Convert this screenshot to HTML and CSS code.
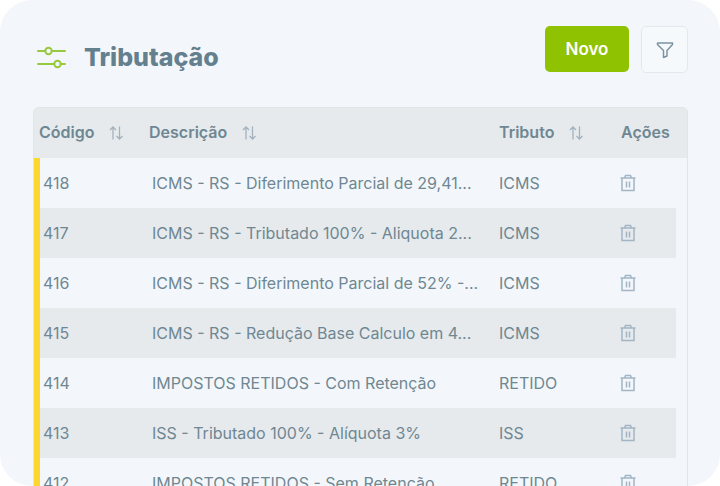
FILE: index.html
```html
<!DOCTYPE html>
<html lang="pt-BR">
<head>
  <meta charset="UTF-8">
  <meta name="viewport" content="width=device-width, initial-scale=1.0">
  <title>Tributação</title>
  <link rel="stylesheet" href="styles.css">
</head>
<body>
  <!-- ícones reutilizados na tabela -->
  <svg class="sprite" aria-hidden="true">
    <symbol id="sort" viewBox="0 0 14 14">
      <path d="M4 13.500V1M1 4l3-3 3 3M10.500 0.500V13M7.500 10l3 3 3-3"/>
    </symbol>
    <symbol id="trash" viewBox="0 0 16 18">
      <path d="M0.500 4h15M2 4v12.500h12V4M4.500 4l1-2.500h5l1 2.500M6.500 7.500v6M9.500 7.500v6"/>
    </symbol>
  </svg>

  <main class="card">
    <header class="topbar">
      <svg class="title-icon" viewBox="0 0 30 24" aria-hidden="true">
        <path d="M1 6h7M15 6h13M1 19h16M24 19h4"/>
        <circle cx="11.500" cy="6" r="3.200"/>
        <circle cx="20.500" cy="19" r="3.200"/>
      </svg>
      <h1>Tributação</h1>
      <button type="button" class="btn-new">Novo</button>
      <button type="button" class="btn-filter" aria-label="Filtrar">
        <svg viewBox="0 0 18 18" aria-hidden="true">
          <path d="M1.500 2h15v1.500L11 9.500V15l-3.500 1.500v-7L1.500 3.500z"/>
        </svg>
      </button>
    </header>

    <div class="table-box">
      <table>
        <colgroup>
          <col class="col-code">
          <col>
          <col class="col-tax">
          <col class="col-actions">
        </colgroup>
        <thead>
          <tr>
            <th>Código <svg class="sort"><use href="#sort"/></svg></th>
            <th>Descrição <svg class="sort"><use href="#sort"/></svg></th>
            <th>Tributo <svg class="sort"><use href="#sort"/></svg></th>
            <th>Ações</th>
          </tr>
        </thead>
        <tbody>
          <tr>
            <td>418</td>
            <td>ICMS - RS - Diferimento Parcial de 29,41...</td>
            <td>ICMS</td>
            <td><button type="button" class="btn-trash" aria-label="Excluir 418"><svg><use href="#trash"/></svg></button></td>
          </tr>
          <tr>
            <td>417</td>
            <td>ICMS - RS - Tributado 100% - Aliquota 2...</td>
            <td>ICMS</td>
            <td><button type="button" class="btn-trash" aria-label="Excluir 417"><svg><use href="#trash"/></svg></button></td>
          </tr>
          <tr>
            <td>416</td>
            <td>ICMS - RS - Diferimento Parcial de 52% -...</td>
            <td>ICMS</td>
            <td><button type="button" class="btn-trash" aria-label="Excluir 416"><svg><use href="#trash"/></svg></button></td>
          </tr>
          <tr>
            <td>415</td>
            <td>ICMS - RS - Redução Base Calculo em 4...</td>
            <td>ICMS</td>
            <td><button type="button" class="btn-trash" aria-label="Excluir 415"><svg><use href="#trash"/></svg></button></td>
          </tr>
          <tr>
            <td>414</td>
            <td>IMPOSTOS RETIDOS - Com Retenção</td>
            <td>RETIDO</td>
            <td><button type="button" class="btn-trash" aria-label="Excluir 414"><svg><use href="#trash"/></svg></button></td>
          </tr>
          <tr>
            <td>413</td>
            <td>ISS - Tributado 100% - Alíquota 3%</td>
            <td>ISS</td>
            <td><button type="button" class="btn-trash" aria-label="Excluir 413"><svg><use href="#trash"/></svg></button></td>
          </tr>
          <tr>
            <td>412</td>
            <td>IMPOSTOS RETIDOS - Sem Retenção</td>
            <td>RETIDO</td>
            <td><button type="button" class="btn-trash" aria-label="Excluir 412"><svg><use href="#trash"/></svg></button></td>
          </tr>
        </tbody>
      </table>
    </div>
  </main>
</body>
</html>
```
FILE: styles.css
```css
* {
  box-sizing: border-box;
}
body {
  margin: 0;
  background: #fff;
  color: #6f8792;
  font: 16px/20px Inter, "Liberation Sans", sans-serif;
}
svg {
  fill: none;
  stroke: currentColor;
}
button {
  font: inherit;
  cursor: pointer;
}
.sprite {
  display: none;
}
.card {
  height: 100vh;
  padding: 26px 32px 0 33px;
  overflow: hidden;
  background: #f3f7fb;
  border-radius: 32px;
}

/* cabeçalho */
.topbar {
  display: flex;
  align-items: flex-start;
  margin-bottom: 34px;
}
.title-icon {
  width: 30px;
  height: 24px;
  margin: 19px 17px 0 4px;
  color: #97c93d;
  stroke-width: 2;
  stroke-linecap: round;
}
h1 {
  flex: 1;
  margin: 16px 0 0;
  color: #64808f;
  font-size: 25px;
  font-weight: 800;
  line-height: 30px;
}
.btn-new {
  width: 84px;
  height: 46px;
  margin-right: 12px;
  border: 0;
  border-radius: 5px;
  background: #8fc200;
  color: #fff;
  font-size: 17px;
  font-weight: 600;
}
.btn-filter {
  display: grid;
  place-items: center;
  width: 47px;
  height: 47px;
  padding: 0;
  border: 1px solid #e3e8ed;
  border-radius: 5px;
  background: #f5f9fc;
  color: #7b93a0;
}
.btn-filter svg {
  width: 18px;
  height: 18px;
  stroke-width: 1.5;
  stroke-linejoin: round;
}

/* tabela */
.table-box {
  overflow: hidden;
  border: 1px solid #e0e5e9;
  border-radius: 5px 5px 0 0;
}
table {
  width: 100%;
  table-layout: fixed;
  border-spacing: 0;
}
.col-code {
  width: 110px;
}
.col-tax {
  width: 122px;
}
.col-actions {
  width: 71px;
}
th,
td {
  height: 50px;
  padding: 0 5px;
  text-align: left;
  white-space: nowrap;
}
th {
  padding-bottom: 2px;
  background: #e6eaed;
  font-weight: 600;
}
td {
  overflow: hidden;
  text-overflow: ellipsis;
}
td:first-child {
  padding-left: 3px;
  border-left: 6px solid #fcd72f;
}
td:nth-child(2) {
  padding-left: 8px;
}
td:last-child {
  padding-left: 4px;
  border-right: 11px solid #f3f7fb;
}
tbody tr:nth-child(even) {
  background: #e6eaed;
}
.sort {
  width: 14px;
  height: 14px;
  margin-left: 11px;
  color: #a3b2bf;
  stroke-width: 1.3;
  vertical-align: -2px;
}
.btn-trash {
  display: block;
  padding: 0;
  border: 0;
  background: none;
  color: #a3b5c5;
}
.btn-trash svg {
  display: block;
  width: 16px;
  height: 18px;
  stroke-width: 1.5;
}
```
